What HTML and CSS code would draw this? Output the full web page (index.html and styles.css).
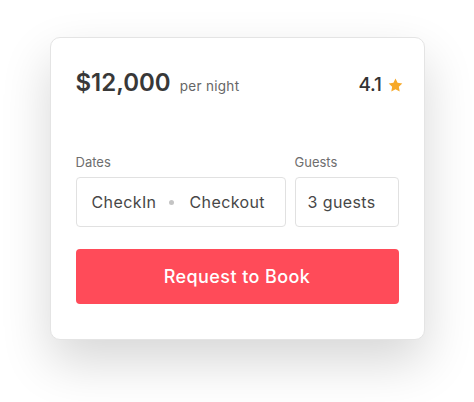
FILE: index.html
```html
<!DOCTYPE html>
<html lang="en">
<head>
<meta charset="utf-8">
<title>Booking</title>
<link rel="stylesheet" href="styles.css">
</head>
<body>
<div class="card">
  <div class="header">
    <div class="price"><span class="amount">$12,000</span><span class="per">per night</span></div>
    <div class="rating"><span class="score">4.1</span>
      <svg class="star" width="15" height="14" viewBox="0 0 24 23"><path d="M12 0.8l3.4 7.2 7.8 1-5.7 5.4 1.4 7.8L12 18.4l-6.9 3.8 1.4-7.8L0.8 9l7.8-1z" fill="#F7A928"/></svg>
    </div>
  </div>
  <div class="fields">
    <div class="field">
      <div class="label">Dates</div>
      <div class="box dates"><span>CheckIn</span><span class="dot"></span><span>Checkout</span></div>
    </div>
    <div class="field">
      <div class="label">Guests</div>
      <div class="box guests"><span>3 guests</span></div>
    </div>
  </div>
  <button class="book">Request to Book</button>
</div>
</body>
</html>
```
FILE: styles.css
```css
* { box-sizing: border-box; }
html, body { margin: 0; background: #fff; }
body {
  font-family: Inter, "Noto Sans", sans-serif;
  display: flex;
  justify-content: center;
  padding-top: 37px;
  height: 402px;
  overflow: hidden;
}
.card {
  width: 375px;
  height: 303px;
  background: #fff;
  border: 1px solid #e4e4e4;
  border-radius: 10px;
  padding: 27px 25px 0 25px;
  box-shadow: 0 22px 50px rgba(0, 0, 0, 0.16);
}
.header {
  display: flex;
  justify-content: space-between;
  align-items: baseline;
  height: 36px;
}
.amount {
  font-size: 24px;
  font-weight: 600;
  color: #383838;
  letter-spacing: 0;
  line-height: 36px;
}
.per {
  font-size: 13.5px;
  color: #666;
  margin-left: 9px;
  letter-spacing: 0.3px;
}
.rating {
  display: flex;
  align-items: baseline;
  gap: 6px;
  margin-right: -4px;
}
.score {
  font-size: 19px;
  color: #333;
  font-weight: 500;
  letter-spacing: -0.3px;
}
.star { position: relative; top: 1px; }
.fields {
  display: grid;
  grid-template-columns: 210px 1fr;
  gap: 9px;
  margin-top: 53px;
}
.label {
  font-size: 13px;
  color: #6e6e6e;
  line-height: 16px;
  margin-bottom: 7px;
}
.box {
  height: 50px;
  border: 1px solid #e1e1e1;
  border-radius: 4px;
  display: flex;
  align-items: center;
  font-size: 16px;
  color: #474747;
  letter-spacing: 0.4px;
}
.dates { padding-left: 15px; }
.dot {
  width: 5px;
  height: 5px;
  border-radius: 50%;
  background: #c4c4c4;
  margin: 0 15px 0 13px;
}
.guests { padding-left: 12px; }
.book {
  display: block;
  width: 100%;
  height: 55px;
  margin-top: 22px;
  border: none;
  border-radius: 4px;
  background: #FF4B59;
  color: #fff;
  font-family: Inter, "Noto Sans", sans-serif;
  font-size: 18px;
  font-weight: 500;
  letter-spacing: 0.4px;
}
```
